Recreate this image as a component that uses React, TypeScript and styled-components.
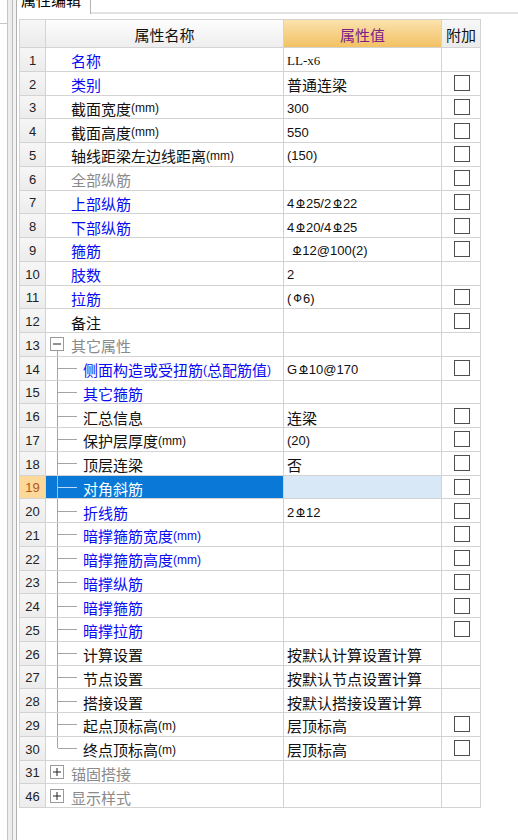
import React from "react";
import styled, { createGlobalStyle, css } from "styled-components";

const GlobalStyle = createGlobalStyle`
  html, body { margin: 0; padding: 0; background: #ffffff; overflow: hidden; }
  body { font-family: "Noto Sans CJK SC", "Liberation Sans", sans-serif; color: #000; }
`;

type Tone = "blue" | "black" | "gray";
type Kind = "top" | "group" | "child" | "last";

interface RowData {
  n: string;
  name: string;
  tone: Tone;
  kind: Kind;
  value?: string;
  serif?: boolean;
  cb: boolean;
  open?: boolean;
  selected?: boolean;
}

const rows: RowData[] = [
  { n: "1", name: "名称", tone: "blue", kind: "top", value: "LL-x6", serif: true, cb: false },
  { n: "2", name: "类别", tone: "blue", kind: "top", value: "普通连梁", cb: true },
  { n: "3", name: "截面宽度(mm)", tone: "black", kind: "top", value: "300", cb: true },
  { n: "4", name: "截面高度(mm)", tone: "black", kind: "top", value: "550", cb: true },
  { n: "5", name: "轴线距梁左边线距离(mm)", tone: "black", kind: "top", value: "(150)", cb: true },
  { n: "6", name: "全部纵筋", tone: "gray", kind: "top", cb: true },
  { n: "7", name: "上部纵筋", tone: "blue", kind: "top", value: "4#25/2#22", cb: true },
  { n: "8", name: "下部纵筋", tone: "blue", kind: "top", value: "4#20/4#25", cb: true },
  { n: "9", name: "箍筋", tone: "blue", kind: "top", value: " #12@100(2)", cb: true },
  { n: "10", name: "肢数", tone: "blue", kind: "top", value: "2", cb: false },
  { n: "11", name: "拉筋", tone: "blue", kind: "top", value: "($6)", cb: true },
  { n: "12", name: "备注", tone: "black", kind: "top", cb: true },
  { n: "13", name: "其它属性", tone: "gray", kind: "group", open: true, cb: false },
  { n: "14", name: "侧面构造或受扭筋(总配筋值)", tone: "blue", kind: "child", value: "G#10@170", cb: true },
  { n: "15", name: "其它箍筋", tone: "blue", kind: "child", cb: false },
  { n: "16", name: "汇总信息", tone: "black", kind: "child", value: "连梁", cb: true },
  { n: "17", name: "保护层厚度(mm)", tone: "black", kind: "child", value: "(20)", cb: true },
  { n: "18", name: "顶层连梁", tone: "black", kind: "child", value: "否", cb: true },
  { n: "19", name: "对角斜筋", tone: "blue", kind: "child", cb: true, selected: true },
  { n: "20", name: "折线筋", tone: "blue", kind: "child", value: "2#12", cb: true },
  { n: "21", name: "暗撑箍筋宽度(mm)", tone: "blue", kind: "child", cb: true },
  { n: "22", name: "暗撑箍筋高度(mm)", tone: "blue", kind: "child", cb: true },
  { n: "23", name: "暗撑纵筋", tone: "blue", kind: "child", cb: true },
  { n: "24", name: "暗撑箍筋", tone: "blue", kind: "child", cb: true },
  { n: "25", name: "暗撑拉筋", tone: "blue", kind: "child", cb: true },
  { n: "26", name: "计算设置", tone: "black", kind: "child", value: "按默认计算设置计算", cb: false },
  { n: "27", name: "节点设置", tone: "black", kind: "child", value: "按默认节点设置计算", cb: false },
  { n: "28", name: "搭接设置", tone: "black", kind: "child", value: "按默认搭接设置计算", cb: false },
  { n: "29", name: "起点顶标高(m)", tone: "black", kind: "child", value: "层顶标高", cb: true },
  { n: "30", name: "终点顶标高(m)", tone: "black", kind: "last", value: "层顶标高", cb: true },
  { n: "31", name: "锚固搭接", tone: "gray", kind: "group", open: false, cb: false },
  { n: "46", name: "显示样式", tone: "gray", kind: "group", open: false, cb: false },
];

const COLS = "26px 238px 158px 39px";
const GRID = "#d3d3d3";

/* ---------- chrome ---------- */

const Screen = styled.div`
  display: flex;
  width: 518px;
  height: 840px;
  overflow: hidden;
  background: #fff;
`;

const Rail = styled.div`
  flex: none;
  display: flex;
  height: 100%;
`;

const RailStub = styled.div`
  flex: none;
  width: 7px;
  background: #fff;
`;

const RailStubTop = styled.div`
  height: 23px;
  border-bottom: 1px solid #c4c4c4;
`;

const RailGap = styled.div`
  flex: none;
  width: 4px;
  background: #ededed;
  border-left: 1px solid #c6c6c6;
  border-right: 1px solid #bdbdbd;
`;

const RailInner = styled.div`
  flex: none;
  width: 3px;
  background: #f3f3f3;
`;

const Main = styled.div`
  flex: 1;
  display: flex;
  flex-direction: column;
  min-width: 0;
  border-left: 1px solid #b0b0b0;
`;

const TabStrip = styled.div`
  flex: none;
  display: flex;
  height: 14px;
`;

const Tab = styled.div`
  flex: none;
  width: 74px;
  height: 14px;
  border-right: 1px solid #b4b4b4;
  background: #fff;
  overflow: hidden;
  padding-left: 4px;
  box-sizing: border-box;
`;

const TabLabel = styled.div`
  margin-top: -8px;
  font-size: 15px;
  line-height: 15px;
  color: #000;
  white-space: nowrap;
`;

const TabFill = styled.div`
  flex: 1;
  border-bottom: 2px solid #e2e2e2;
  box-sizing: border-box;
`;

const Panel = styled.div`
  flex: 1;
  padding: 5px 0 0 2px;
  background: #fff;
`;

/* ---------- table ---------- */

const Table = styled.div`
  display: flex;
  flex-direction: column;
  width: max-content;
  border-left: 1px solid ${GRID};
  border-top: 1px solid ${GRID};
`;

const Row = styled.div<{ $h: number }>`
  display: grid;
  grid-template-columns: ${COLS};
  height: ${(p) => p.$h}px;
`;

const cellBase = css`
  box-sizing: border-box;
  display: flex;
  align-items: center;
  min-width: 0;
  overflow: hidden;
  white-space: nowrap;
  border-right: 1px solid ${GRID};
  border-bottom: 1px solid ${GRID};
  line-height: 1;
`;

const HeadCell = styled.div<{ $variant: "plain" | "name" | "value" }>`
  ${cellBase};
  justify-content: center;
  padding-top: 2px;
  font-size: 15px;
  background: ${(p) =>
    p.$variant === "value"
      ? "linear-gradient(#fbe2ae, #f2c163)"
      : p.$variant === "name"
      ? "linear-gradient(#fdfdfd, #eeeeee)"
      : "linear-gradient(#f7f7f7, #ebebeb)"};
  color: ${(p) => (p.$variant === "value" ? "#7a2088" : "#111")};
`;

const NumCell = styled.div<{ $sel?: boolean }>`
  ${cellBase};
  justify-content: center;
  padding-top: 2px;
  font-family: "Liberation Sans", Arial, sans-serif;
  font-size: 13px;
  background: ${(p) => (p.$sel ? "#fcd89b" : "linear-gradient(#f6f6f6, #ececec)")};
  color: ${(p) => (p.$sel ? "#b4561c" : "#222")};
`;

const toneColor: Record<Tone, string> = {
  blue: "#0a0af2",
  black: "#111",
  gray: "#8a8a8a",
};

const NameCell = styled.div<{ $tone: Tone; $sel?: boolean; $indent: number }>`
  ${cellBase};
  align-items: stretch;
  padding-left: ${(p) => p.$indent}px;
  background: ${(p) => (p.$sel ? "#0a78d6" : "#fff")};
  color: ${(p) => (p.$sel ? "#fff" : toneColor[p.$tone])};
`;

const NameText = styled.span`
  display: flex;
  align-items: center;
  padding-top: 3px;
`;

const ValueCell = styled.div<{ $sel?: boolean; $serif?: boolean }>`
  ${cellBase};
  padding: 3px 0 0 3px;
  background: ${(p) => (p.$sel ? "#d9e8f7" : "#fff")};
  color: #111;
`;

const AddCell = styled.div`
  ${cellBase};
  justify-content: center;
  background: #fff;
`;

const CheckBox = styled.span`
  display: block;
  width: 16px;
  height: 16px;
  box-sizing: border-box;
  border: 1px solid #4f4f4f;
  background: #fff;
  margin-left: 2px;
`;

const Han = styled.span`
  font-family: "Noto Sans CJK SC", sans-serif;
  font-size: 15px;
`;

const Latin = styled.span<{ $small?: boolean; $serif?: boolean }>`
  font-family: ${(p) =>
    p.$serif ? `"Liberation Serif", "Times New Roman", serif` : `"Liberation Sans", Arial, sans-serif`};
  font-size: ${(p) => (p.$small ? 12 : 13)}px;
  white-space: pre;
`;

const Rebar = styled.span<{ $grade: 1 | 3 }>`
  font-family: "DejaVu Sans", sans-serif;
  font-size: 11px;
  margin: 0 1px 0 2px;
  text-decoration: ${(p) => (p.$grade === 3 ? "underline" : "none")};
  text-underline-offset: 0px;
  text-decoration-thickness: 1px;
`;

/* ---------- tree drawing ---------- */

const Guide = styled.span<{ $last?: boolean; $sel?: boolean }>`
  flex: none;
  position: relative;
  width: 37px;
  &::before {
    content: "";
    position: absolute;
    left: 11px;
    top: 0;
    width: 1px;
    height: ${(p) => (p.$last ? "50%" : "100%")};
    background: ${(p) => (p.$sel ? "#8fc0ee" : "#a4a4a4")};
  }
  &::after {
    content: "";
    position: absolute;
    left: 12px;
    top: 50%;
    width: 19px;
    height: 1px;
    background: ${(p) => (p.$sel ? "#bcdaf6" : "#a4a4a4")};
  }
`;

const ExpanderSlot = styled.span<{ $open?: boolean }>`
  flex: none;
  position: relative;
  width: 25px;
  display: flex;
  align-items: center;
  padding-left: 4px;
  box-sizing: border-box;
  &::after {
    content: "";
    display: ${(p) => (p.$open ? "block" : "none")};
    position: absolute;
    left: 11px;
    top: calc(50% + 7px);
    bottom: 0;
    width: 1px;
    background: #a4a4a4;
  }
`;

function ExpanderIcon({ open }: { open?: boolean }) {
  return (
    <svg width="14" height="14" viewBox="0 0 14 14" style={{ display: "block" }}>
      <rect x="0.5" y="0.5" width="13" height="13" fill="#fff" stroke="#9a9a9a" />
      <line x1="3" y1="7" x2="11" y2="7" stroke="#222" strokeWidth="1" />
      {!open && <line x1="7" y1="3" x2="7" y2="11" stroke="#222" strokeWidth="1" />}
    </svg>
  );
}

/* ---------- text helpers ---------- */

const CJK = /[\u3000-\u303f\u3400-\u9fff\uff00-\uffef]/;

function Runs({ text, small, serif }: { text: string; small?: boolean; serif?: boolean }) {
  const parts = text.match(/[\u3000-\u303f\u3400-\u9fff\uff00-\uffef]+|[^\u3000-\u303f\u3400-\u9fff\uff00-\uffef]+/g) || [];
  return (
    <>
      {parts.map((p, i) =>
        CJK.test(p) ? (
          <Han key={i}>{p}</Han>
        ) : (
          <Latin key={i} $small={small} $serif={serif}>
            {p}
          </Latin>
        )
      )}
    </>
  );
}

function ValueText({ text, serif }: { text: string; serif?: boolean }) {
  const pieces = text.split(/([#$])/);
  return (
    <>
      {pieces.map((p, i) => {
        if (p === "#") return <Rebar key={i} $grade={3}>Φ</Rebar>;
        if (p === "$") return <Rebar key={i} $grade={1}>Φ</Rebar>;
        if (!p) return null;
        return <Runs key={i} text={p} serif={serif} />;
      })}
    </>
  );
}

function NameContent({ r }: { r: RowData }) {
  const label = (
    <NameText>
      <Runs text={r.name} small />
    </NameText>
  );
  if (r.kind === "group") {
    return (
      <>
        <ExpanderSlot $open={r.open}>
          <ExpanderIcon open={r.open} />
        </ExpanderSlot>
        {label}
      </>
    );
  }
  if (r.kind === "child" || r.kind === "last") {
    return (
      <>
        <Guide $last={r.kind === "last"} $sel={r.selected} />
        {label}
      </>
    );
  }
  return label;
}

export default function App() {
  return (
    <>
      <GlobalStyle />
      <Screen>
        <Rail>
          <RailStub>
            <RailStubTop />
          </RailStub>
          <RailGap />
          <RailInner />
        </Rail>
        <Main>
          <TabStrip>
            <Tab>
              <TabLabel>属性编辑</TabLabel>
            </Tab>
            <TabFill />
          </TabStrip>
          <Panel>
            <Table>
              <Row $h={28}>
                <HeadCell $variant="plain" />
                <HeadCell $variant="name">属性名称</HeadCell>
                <HeadCell $variant="value">属性值</HeadCell>
                <HeadCell $variant="plain">附加</HeadCell>
              </Row>
              {rows.map((r) => (
                <Row key={r.n} $h={23.75}>
                  <NumCell $sel={r.selected}>{r.n}</NumCell>
                  <NameCell
                    $tone={r.tone}
                    $sel={r.selected}
                    $indent={r.kind === "top" ? 25 : 0}
                  >
                    <NameContent r={r} />
                  </NameCell>
                  <ValueCell $sel={r.selected}>
                    {r.value ? <ValueText text={r.value} serif={r.serif} /> : null}
                  </ValueCell>
                  <AddCell>{r.cb ? <CheckBox /> : null}</AddCell>
                </Row>
              ))}
            </Table>
          </Panel>
        </Main>
      </Screen>
    </>
  );
}
